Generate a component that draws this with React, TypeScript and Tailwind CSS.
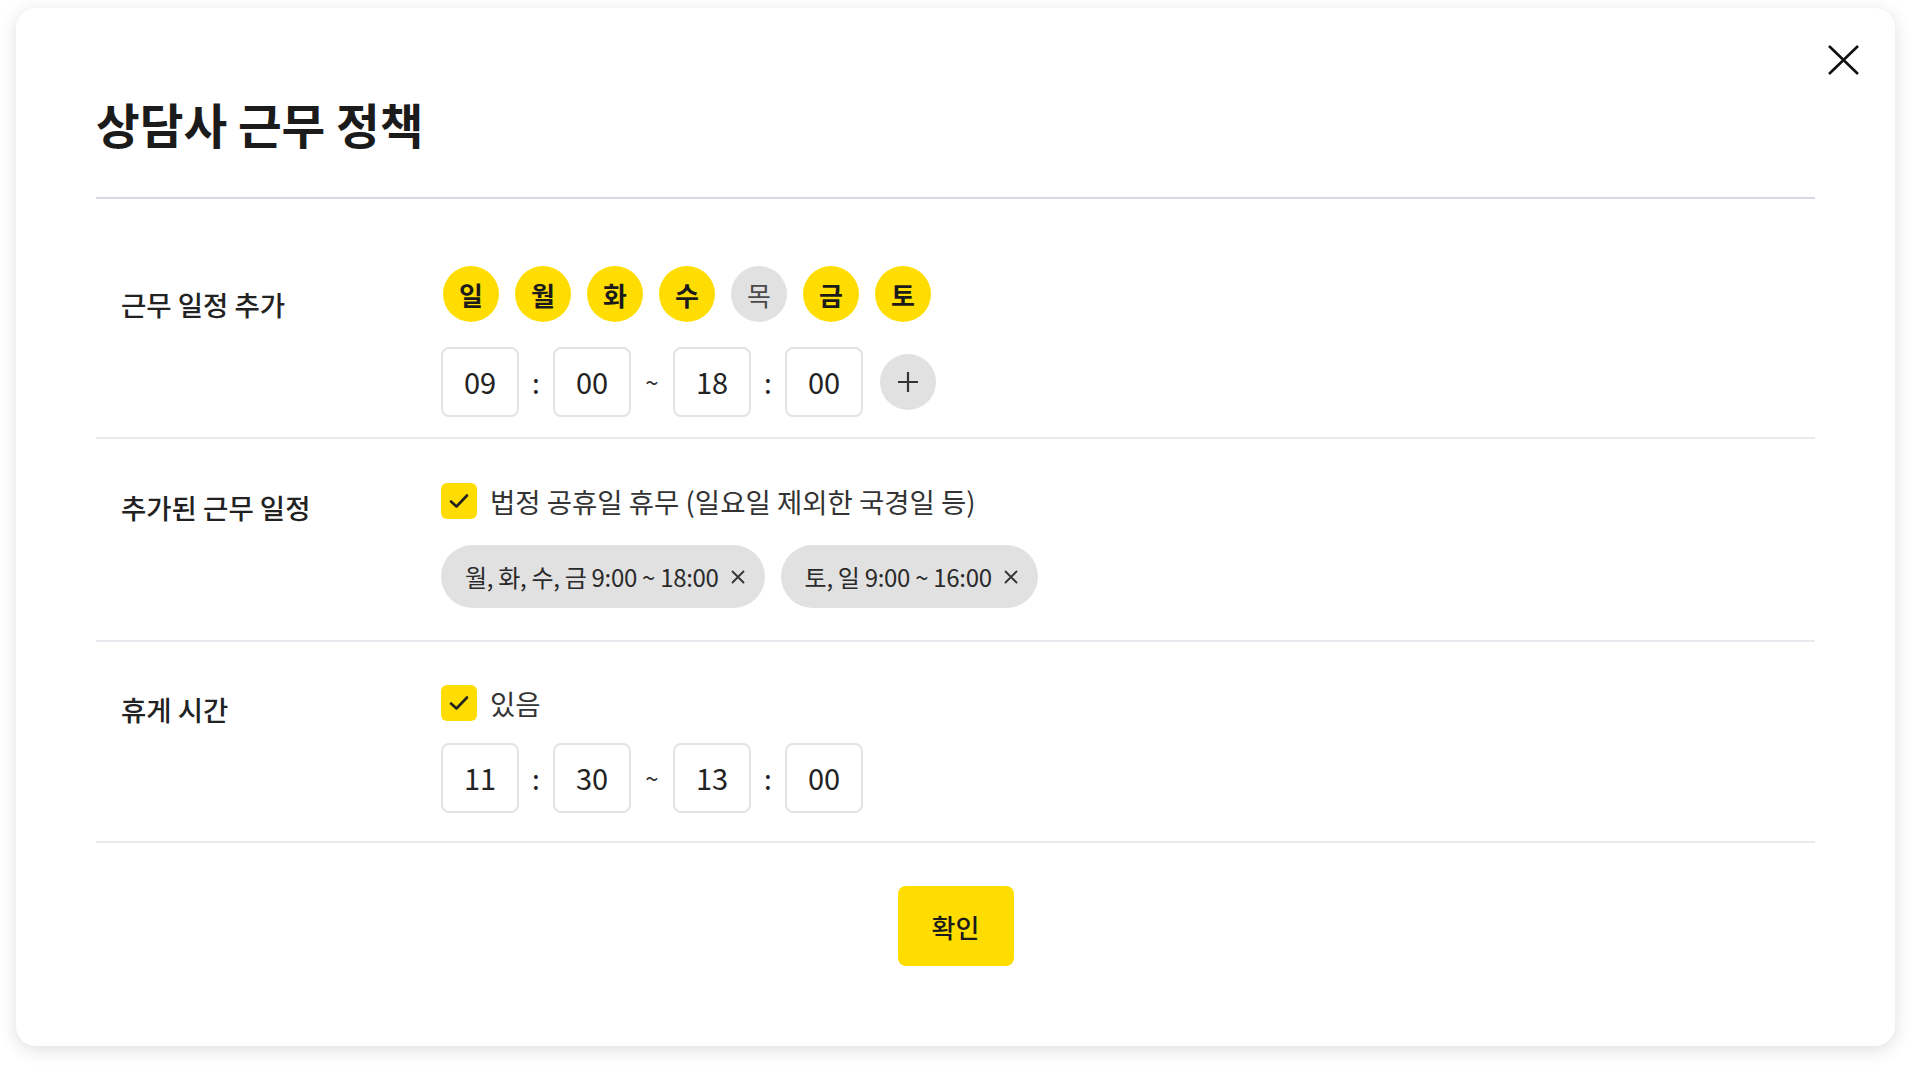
import { useState } from "react";

const DAYS = [
  { label: "일", on: true },
  { label: "월", on: true },
  { label: "화", on: true },
  { label: "수", on: true },
  { label: "목", on: false },
  { label: "금", on: true },
  { label: "토", on: true },
];

const font = { fontFamily: '"Noto Sans CJK KR", "Noto Sans", sans-serif' };

function CheckBox({ checked, onChange }: { checked: boolean; onChange: () => void }) {
  return (
    <button
      onClick={onChange}
      className={`flex h-9 w-9 shrink-0 items-center justify-center rounded-md ${
        checked ? "bg-[#ffdd00]" : "border-2 border-[#d9d9d9] bg-white"
      }`}
    >
      {checked && (
        <svg width="20" height="16" viewBox="0 0 20 16" fill="none">
          <path d="M2 8.5L7.5 13.5L18 2.5" stroke="#222" strokeWidth="2.6" strokeLinecap="round" strokeLinejoin="round" />
        </svg>
      )}
    </button>
  );
}

function TimeBox({ value }: { value: string }) {
  return (
    <div className="flex h-[70px] w-[78px] items-center justify-center rounded-lg border-2 border-[#e3e3e3] text-[29px] text-[#222]">
      {value}
    </div>
  );
}

function TimeRange({ from, to }: { from: [string, string]; to: [string, string] }) {
  return (
    <div className="flex items-center">
      <TimeBox value={from[0]} />
      <span className="w-[34px] text-center text-[28px] text-[#222]">:</span>
      <TimeBox value={from[1]} />
      <span className="w-[42px] text-center text-[24px] text-[#333]">~</span>
      <TimeBox value={to[0]} />
      <span className="w-[34px] text-center text-[28px] text-[#222]">:</span>
      <TimeBox value={to[1]} />
    </div>
  );
}

function Chip({ text }: { text: string }) {
  return (
    <div className="flex h-[63px] items-center gap-3 rounded-full bg-[#e1e1e1] pl-[24px] pr-[20px] text-[24px] tracking-[-0.3px] text-[#2a2a2a]">
      <span>{text}</span>
      <svg width="14" height="14" viewBox="0 0 14 14" fill="none">
        <path d="M1.5 1.5L12.5 12.5M12.5 1.5L1.5 12.5" stroke="#333" strokeWidth="1.8" strokeLinecap="round" />
      </svg>
    </div>
  );
}

export default function App() {
  const [days, setDays] = useState(DAYS);
  const [holiday, setHoliday] = useState(true);
  const [breakOn, setBreakOn] = useState(true);

  return (
    <div className="min-h-screen bg-white pl-4 pr-[17px] pt-2" style={font}>
      <div className="relative h-[1038px] rounded-[20px] bg-white px-20 pt-[86px] shadow-[0_4px_18px_rgba(0,0,0,0.13)]">
        <button className="absolute right-[36px] top-[37px]" aria-label="close">
          <svg width="31" height="30" viewBox="0 0 31 30" fill="none">
            <path d="M1 1L30 29M30 1L1 29" stroke="#111" strokeWidth="2.6" />
          </svg>
        </button>

        <h1 className="text-[47.5px] font-bold leading-[60px] text-[#1b1b1b]">상담사 근무 정책</h1>
        <div className="mt-[43px] border-b-2 border-[#d6dae3]" />

        {/* 근무 일정 추가 */}
        <div className="flex border-b-2 border-[#e7eaee] pb-[20px] pt-[67px]">
          <div className="w-[345px] shrink-0 pl-[25px] pt-[20px] text-[27.5px] font-medium leading-[36px] text-[#222]">
            근무 일정 추가
          </div>
          <div className="flex flex-col gap-[25px]">
            <div className="flex gap-4 pl-[2px]">
              {days.map((d, i) => (
                <button
                  key={d.label}
                  onClick={() =>
                    setDays(days.map((x, j) => (j === i ? { ...x, on: !x.on } : x)))
                  }
                  className={`flex h-14 w-14 items-center justify-center rounded-full text-[26px] ${
                    d.on ? "bg-[#ffdd00] font-bold text-[#1b1b1b]" : "bg-[#e1e1e1] text-[#4a4a4a]"
                  }`}
                >
                  {d.label}
                </button>
              ))}
            </div>
            <div className="flex items-center gap-[17px]">
              <TimeRange from={["09", "00"]} to={["18", "00"]} />
              <button className="flex h-14 w-14 items-center justify-center rounded-full bg-[#e1e1e1]">
                <svg width="24" height="24" viewBox="0 0 24 24" fill="none">
                  <path d="M12 2V22M2 12H22" stroke="#333" strokeWidth="2.2" />
                </svg>
              </button>
            </div>
          </div>
        </div>

        {/* 추가된 근무 일정 */}
        <div className="flex border-b-2 border-[#e7eaee] pb-[32px] pt-[44px]">
          <div className="w-[345px] shrink-0 pl-[25px] pt-[6px] text-[27.5px] font-medium leading-[36px] text-[#222]">
            추가된 근무 일정
          </div>
          <div className="flex flex-col gap-[26px]">
            <label className="flex items-center gap-[13px]">
              <CheckBox checked={holiday} onChange={() => setHoliday(!holiday)} />
              <span className="text-[27.5px] leading-[36px] text-[#333]">
                법정 공휴일 휴무 (일요일 제외한 국경일 등)
              </span>
            </label>
            <div className="flex gap-4">
              <Chip text="월, 화, 수, 금 9:00 ~ 18:00" />
              <Chip text="토, 일 9:00 ~ 16:00" />
            </div>
          </div>
        </div>

        {/* 휴게 시간 */}
        <div className="flex border-b-2 border-[#e7eaee] pb-[28px] pt-[43px]">
          <div className="w-[345px] shrink-0 pl-[25px] pt-[6px] text-[27.5px] font-medium leading-[36px] text-[#222]">
            휴게 시간
          </div>
          <div className="flex flex-col gap-[22px]">
            <label className="flex items-center gap-[13px]">
              <CheckBox checked={breakOn} onChange={() => setBreakOn(!breakOn)} />
              <span className="text-[27.5px] leading-[36px] text-[#333]">있음</span>
            </label>
            <TimeRange from={["11", "30"]} to={["13", "00"]} />
          </div>
        </div>

        <div className="flex justify-center pt-[43px]">
          <button className="h-20 w-[116px] rounded-lg bg-[#ffdd00] text-[26px] font-medium text-[#1b1b1b]">
            확인
          </button>
        </div>
      </div>
    </div>
  );
}
